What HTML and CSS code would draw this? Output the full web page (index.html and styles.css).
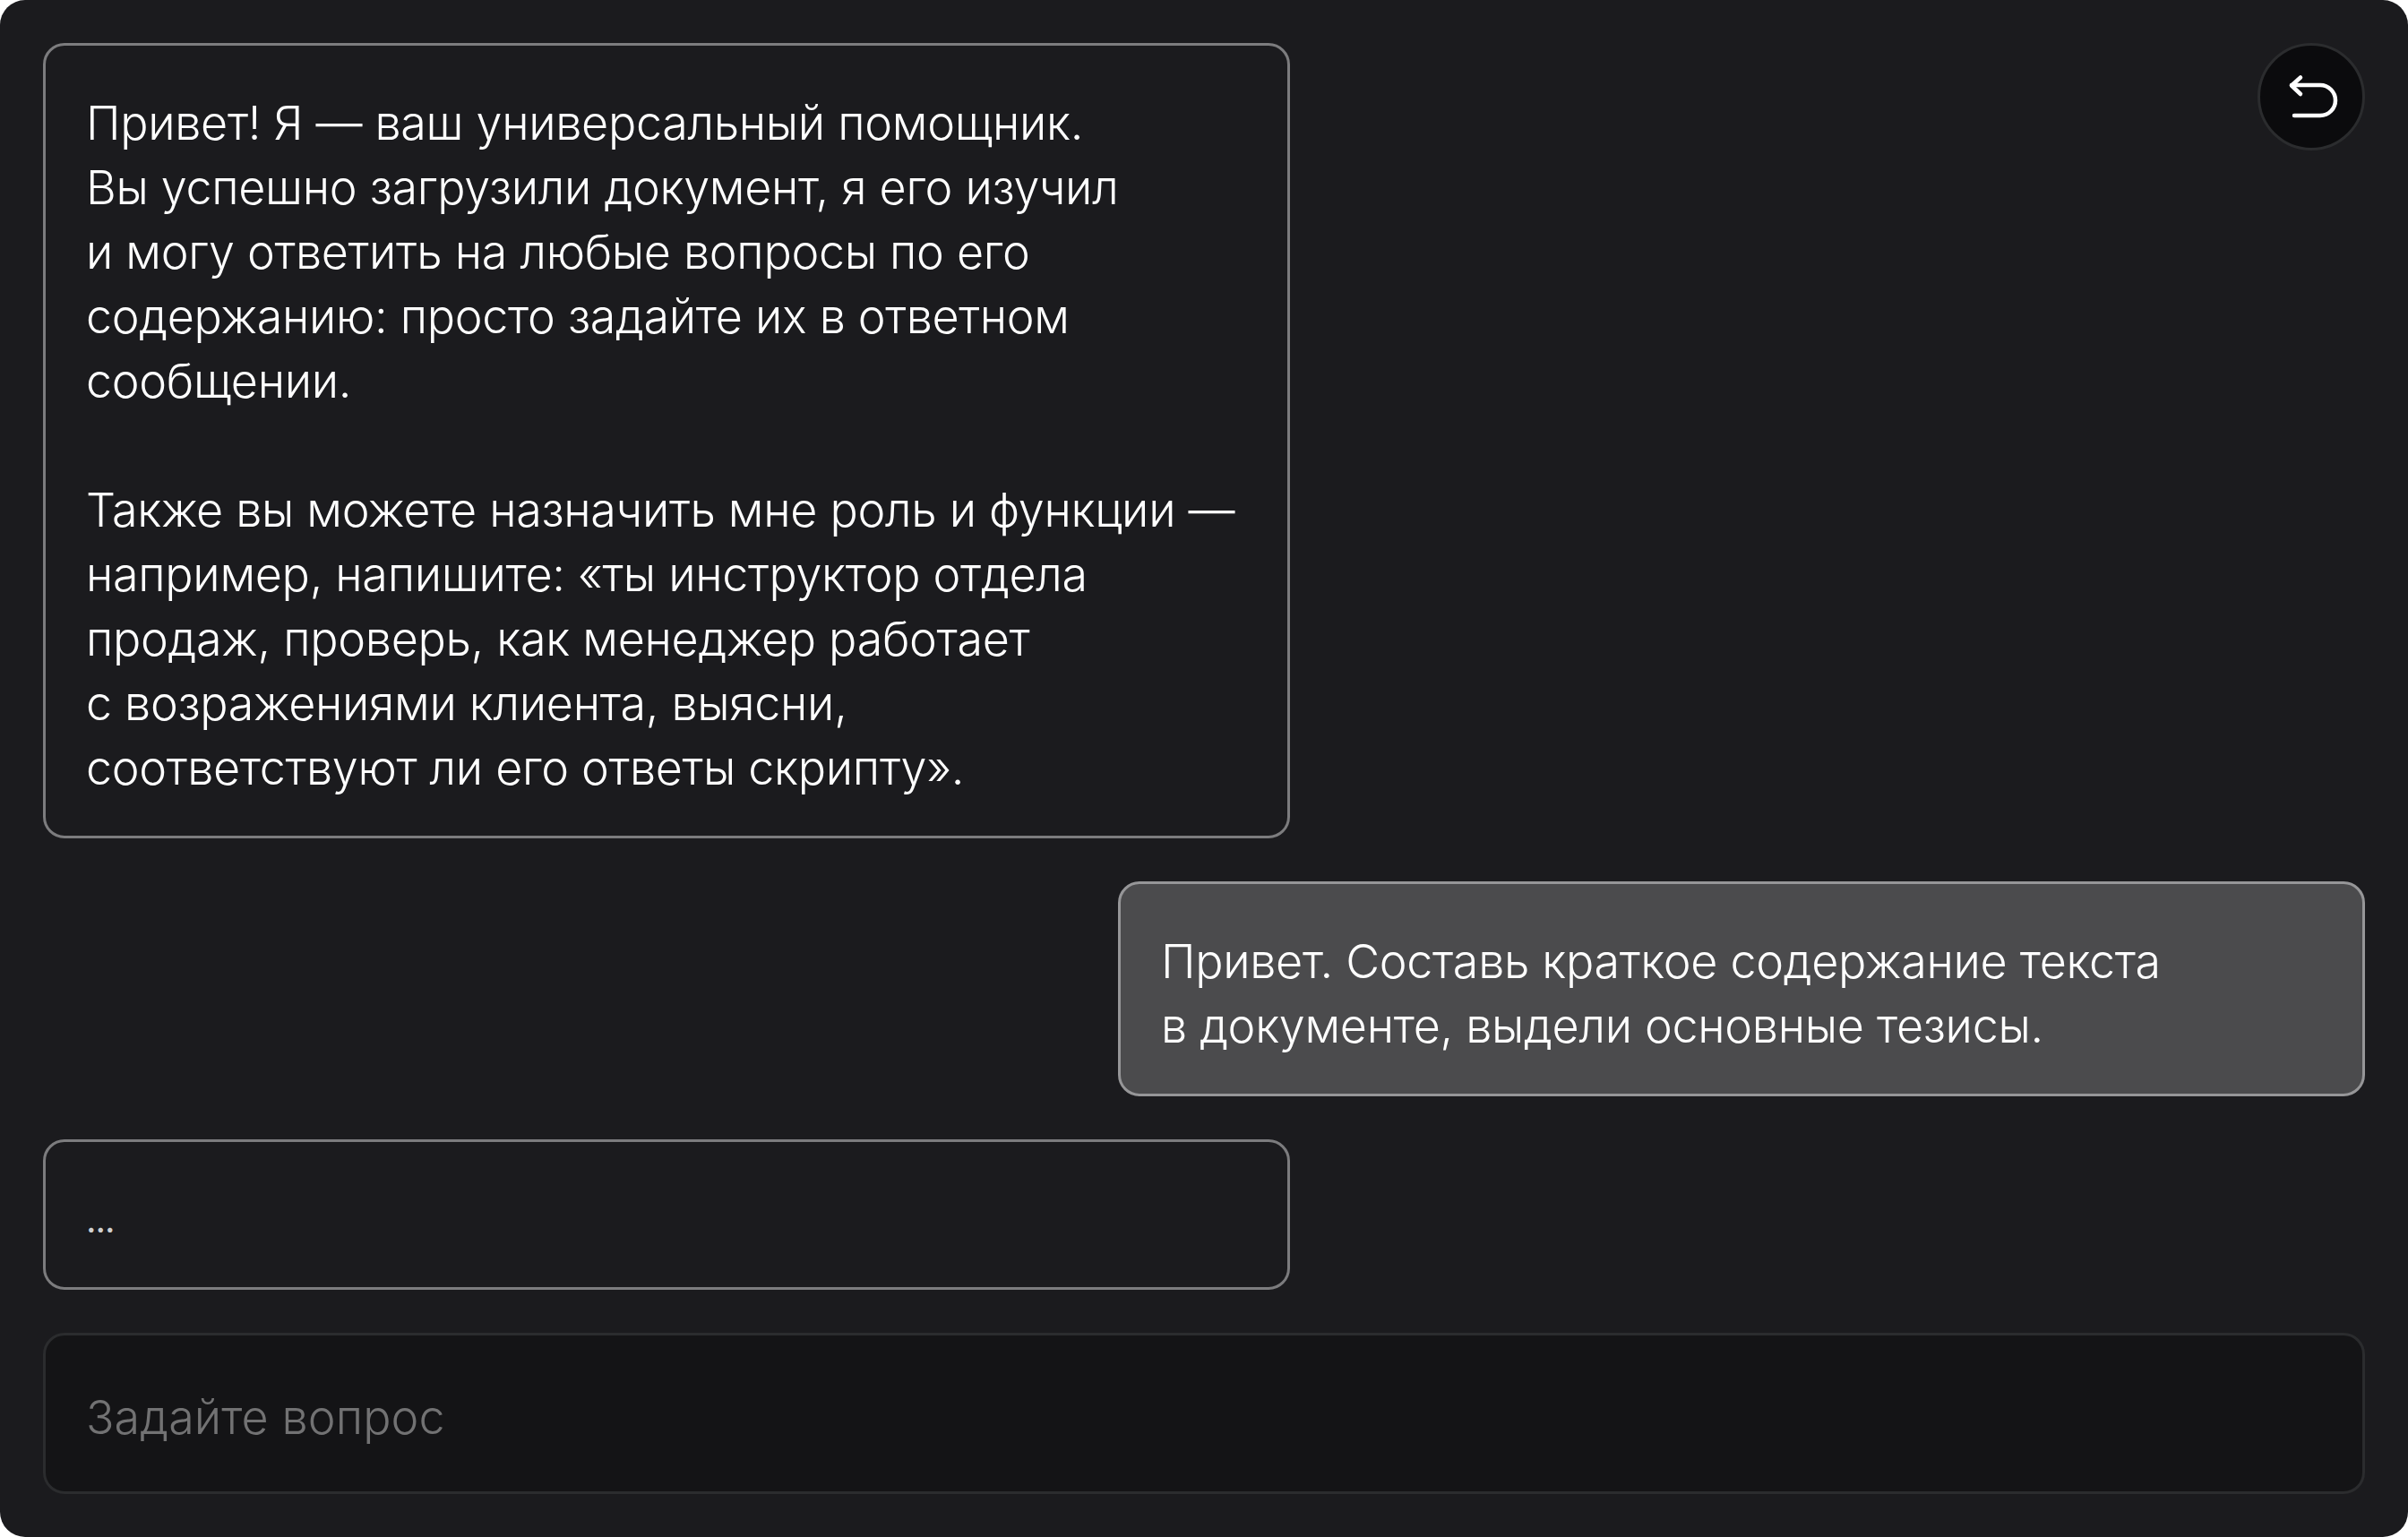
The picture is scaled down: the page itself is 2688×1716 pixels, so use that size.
FILE: index.html
```html
<!DOCTYPE html>
<html lang="ru">
<head>
<meta charset="utf-8">
<title>Чат</title>
<link rel="stylesheet" href="styles.css">
</head>
<body>
<main class="panel">
  <div class="top-row">
    <div class="bubble bot">Привет! Я — ваш универсальный помощник.<br>Вы успешно загрузили документ, я его изучил<br>и могу ответить на любые вопросы по его<br>содержанию: просто задайте их в ответном<br>сообщении.<br><br>Также вы можете назначить мне роль и функции —<br>например, напишите: «ты инструктор отдела<br>продаж, проверь, как менеджер работает<br>с возражениями клиента, выясни,<br>соответствуют ли его ответы скрипту».</div>
    <button class="back" type="button" aria-label="Назад">
      <svg class="back-icon" viewBox="0 0 120 120" width="120" height="120" fill="none" stroke="#fff" stroke-width="4.5" stroke-linecap="round" stroke-linejoin="round">
        <path d="M41 81H70A17 17 0 0 0 70 47H38"/>
        <path d="M48 38.500L38 47.500L48 57"/>
      </svg>
    </button>
  </div>
  <div class="bubble user">Привет. Составь краткое содержание текста<br>в документе, выдели основные тезисы.</div>
  <div class="bubble bot typing">...</div>
  <div class="ask">Задайте вопрос</div>
</main>
</body>
</html>
```
FILE: styles.css
```css
* { box-sizing: border-box; }
html, body { margin: 0; height: 100%; background: #fff; }
.panel {
  width: 2688px;
  height: 1716px;
  padding: 48px;
  display: flex;
  flex-direction: column;
  gap: 48px;
  background: #1b1b1e;
  border-radius: 28px;
  font-family: "Inter", "Noto Sans", sans-serif;
  font-size: 52px;
  font-weight: 350;
  line-height: 72px;
  letter-spacing: -0.3px;
  color: #fff;
}
.top-row { display: flex; justify-content: space-between; align-items: flex-start; }
.bubble {
  width: 1392px;
  padding: 51px 45px 39px;
  border: 3px solid #7c7c7e;
  border-radius: 24px;
}
.user {
  align-self: flex-end;
  background: #4b4b4d;
  border-color: #969698;
}
.typing { color: #d0d0d0; font-size: 40px; font-weight: 400; letter-spacing: -1px; }
.back {
  width: 120px;
  height: 120px;
  padding: 0;
  border: 3px solid #2b2c2e;
  border-radius: 50%;
  background: #0b0b0d;
  display: flex;
  align-items: center;
  justify-content: center;
}
.back-icon { display: block; flex: none; }
.ask {
  height: 180px;
  padding: 10px 45px 0;
  display: flex;
  align-items: center;
  background: #141416;
  border: 3px solid #2b2c2e;
  border-radius: 24px;
  color: #727273;
  letter-spacing: 0.1px;
}
```
